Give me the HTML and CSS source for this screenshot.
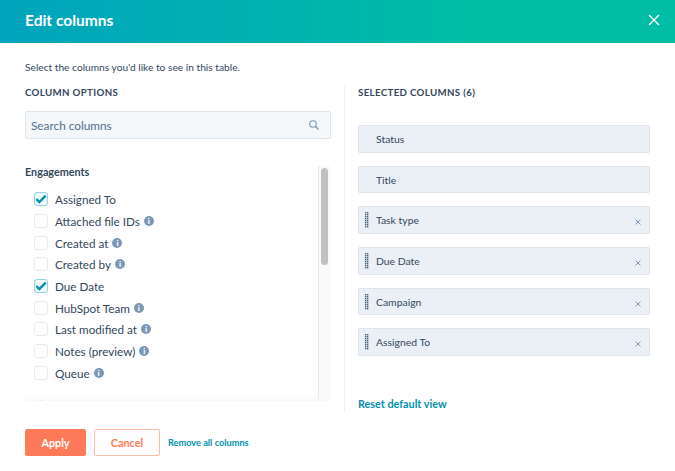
FILE: index.html
```html
<!DOCTYPE html>
<html lang="en">
<head>
<meta charset="utf-8">
<title>Edit columns</title>
<link rel="stylesheet" href="styles.css">
</head>
<body>
<div class="modal">
  <header class="head">
    <h1 class="title">Edit columns</h1>
    <svg class="close" width="12" height="12" viewBox="0 0 12 12"><path d="M1 1l10 10M11 1L1 11" stroke="#fff" stroke-width="1.4" fill="none"/></svg>
  </header>
  <p class="intro">Select the columns you'd like to see in this table.</p>
  <div class="cols">
    <section class="left">
      <h2 class="label">COLUMN OPTIONS</h2>
      <div class="search">
        <span class="ph">Search columns</span>
        <svg width="10" height="10" viewBox="0 0 10 10"><circle cx="4" cy="4" r="3.3" fill="none" stroke="#7c98b6" stroke-width="1.1"/><path d="M6.5 6.5l3 3" stroke="#7c98b6" stroke-width="1.4"/></svg>
      </div>
      <div class="scroller">
        <div class="list">
          <h3 class="group">Engagements</h3>
          <div class="opt"><span class="box on"><svg width="12" height="10" viewBox="0 0 12 10"><path d="M1.3 5l3 3L10.7 1.6" fill="none" stroke="#0091ae" stroke-width="2.4"/></svg></span>Assigned To</div>
          <div class="opt"><span class="box"></span>Attached file IDs<span class="info">i</span></div>
          <div class="opt"><span class="box"></span>Created at<span class="info">i</span></div>
          <div class="opt"><span class="box"></span>Created by<span class="info">i</span></div>
          <div class="opt"><span class="box on"><svg width="12" height="10" viewBox="0 0 12 10"><path d="M1.3 5l3 3L10.7 1.6" fill="none" stroke="#0091ae" stroke-width="2.4"/></svg></span>Due Date</div>
          <div class="opt"><span class="box"></span>HubSpot Team<span class="info">i</span></div>
          <div class="opt"><span class="box"></span>Last modified at<span class="info">i</span></div>
          <div class="opt"><span class="box"></span>Notes (preview)<span class="info">i</span></div>
          <div class="opt"><span class="box"></span>Queue<span class="info">i</span></div>
          <h3 class="group next">Tasks</h3>
        </div>
        <div class="track"><div class="thumb"></div></div>
        <div class="fade"></div>
      </div>
    </section>
    <section class="right">
      <h2 class="label">SELECTED COLUMNS (6)</h2>
      <div class="chips">
        <div class="chip">Status</div>
        <div class="chip">Title</div>
        <div class="chip"><span class="grip"></span>Task type<svg class="x" width="6" height="6" viewBox="0 0 6 6"><path d="M.5.5l5 5M5.5.5l-5 5" stroke="#7c98b6" stroke-width="1"/></svg></div>
        <div class="chip"><span class="grip"></span>Due Date<svg class="x" width="6" height="6" viewBox="0 0 6 6"><path d="M.5.5l5 5M5.5.5l-5 5" stroke="#7c98b6" stroke-width="1"/></svg></div>
        <div class="chip"><span class="grip"></span>Campaign<svg class="x" width="6" height="6" viewBox="0 0 6 6"><path d="M.5.5l5 5M5.5.5l-5 5" stroke="#7c98b6" stroke-width="1"/></svg></div>
        <div class="chip"><span class="grip"></span>Assigned To<svg class="x" width="6" height="6" viewBox="0 0 6 6"><path d="M.5.5l5 5M5.5.5l-5 5" stroke="#7c98b6" stroke-width="1"/></svg></div>
      </div>
      <a class="reset">Reset default view</a>
    </section>
  </div>
  <footer class="foot">
    <button class="btn apply">Apply</button>
    <button class="btn cancel">Cancel</button>
    <a class="remove">Remove all columns</a>
  </footer>
</div>
</body>
</html>
```
FILE: styles.css
```css
* { box-sizing: border-box; }
html, body { margin: 0; padding: 0; background: #fff; }
body { font-family: Lato, "Liberation Sans", sans-serif; color: #33475b; overflow: hidden; }
.modal { width: 675px; height: 471px; display: flex; flex-direction: column; }
.head { height: 43px; flex: none; display: flex; align-items: center; justify-content: space-between; padding: 0 15px 3px 25px; background: linear-gradient(90deg, #00a4bd 0%, #00bda5 70%, #00bda5 100%); }
.title { margin: 0; font-size: 15.5px; font-weight: 700; color: #fff; }
.intro { margin: 17px 0 0 25px; font-size: 10.2px; line-height: 14px; color: #33475b; }
.cols { display: flex; margin-top: 12px; flex: none; height: 326px; }
.left { width: 344px; flex: none; padding-left: 25px; display: flex; flex-direction: column; }
.label { margin: -1px 0 0; font-size: 9.7px; line-height: 14px; font-weight: 700; letter-spacing: .35px; color: #33475b; }
.search { width: 306px; height: 28px; margin-top: 12px; padding: 0 11px 0 5px; display: flex; align-items: center; justify-content: space-between; background: #f5f8fa; border: 1px solid #dfe3eb; border-radius: 2px; }
.ph { font-size: 11.8px; color: #516f90; }
.scroller { width: 306px; height: 235px; margin-top: 27px; position: relative; overflow: hidden; }
.list { width: 293px; }
.group { margin: 0; font-size: 10.8px; line-height: 12px; font-weight: 700; height: 12px; }
.opt { height: 21.7px; margin-left: 9px; display: flex; align-items: center; font-size: 11.7px; color: #33475b; }
.group + .opt { margin-top: 10.5px; }
.box { width: 14px; height: 14px; margin-right: 7px; flex: none; display: flex; align-items: center; justify-content: center; background: #fff; border: 1px solid #e6ebf2; border-radius: 3px; }
.box.on { background: #f0fafb; border-color: #8fd6e2; }
.info { width: 10px; height: 10px; margin-left: 4px; border-radius: 50%; background: #7c98b6; color: #fff; font-size: 8px; line-height: 10px; font-weight: 900; text-align: center; display: inline-block; }
.group.next { margin-top: 15px; color: #99acc2; }
.track { position: absolute; top: 0; right: 0; bottom: 0; width: 13px; background: #fafafa; border-left: 1px solid #e8e8e8; }
.thumb { width: 7px; height: 97px; margin: 2px 0 0 2px; background: #c1c1c1; border-radius: 4px; }
.fade { position: absolute; left: 0; right: 0; bottom: 0; height: 7px; background: linear-gradient(180deg, rgba(245,248,250,0), rgba(245,248,250,.8)); }
.right { flex: 1; padding-left: 13px; border-left: 1px solid #eaf0f6; display: flex; flex-direction: column; }
.chips { margin-top: 26px; width: 292px; display: flex; flex-direction: column; gap: 13px; }
.chip { height: 27.7px; position: relative; display: flex; align-items: center; padding-left: 17px; font-size: 10.4px; background: #eaf0f6; border: 1px solid #dfe3eb; border-radius: 2px; }
.grip { position: absolute; left: 5.5px; top: 5px; width: 4px; height: 16px; background: repeating-linear-gradient(90deg, #425b76 0 1px, rgba(66,91,118,.35) 1px 2px); -webkit-mask: repeating-linear-gradient(#000 0 1px, rgba(0,0,0,.4) 1px 2px); mask: repeating-linear-gradient(#000 0 1px, rgba(0,0,0,.4) 1px 2px); }
.x { position: absolute; right: 8px; top: 12px; }
.reset { margin-top: 41px; font-size: 10.8px; font-weight: 700; color: #0091ae; line-height: 14px; }
.foot { display: flex; align-items: center; padding: 17px 0 0 25px; }
.btn { height: 27px; padding: 0 0 1px; font: 700 10.8px Lato, "Liberation Sans", sans-serif; border-radius: 2px; }
.apply { width: 61px; background: #ff7a59; border: 1px solid #ff7a59; color: #fff; }
.cancel { width: 66px; margin-left: 8px; background: #fff; border: 1px solid #ffbcac; color: #ff7a59; }
.remove { margin-left: 8px; font-size: 9.2px; font-weight: 700; color: #0091ae; }
```
